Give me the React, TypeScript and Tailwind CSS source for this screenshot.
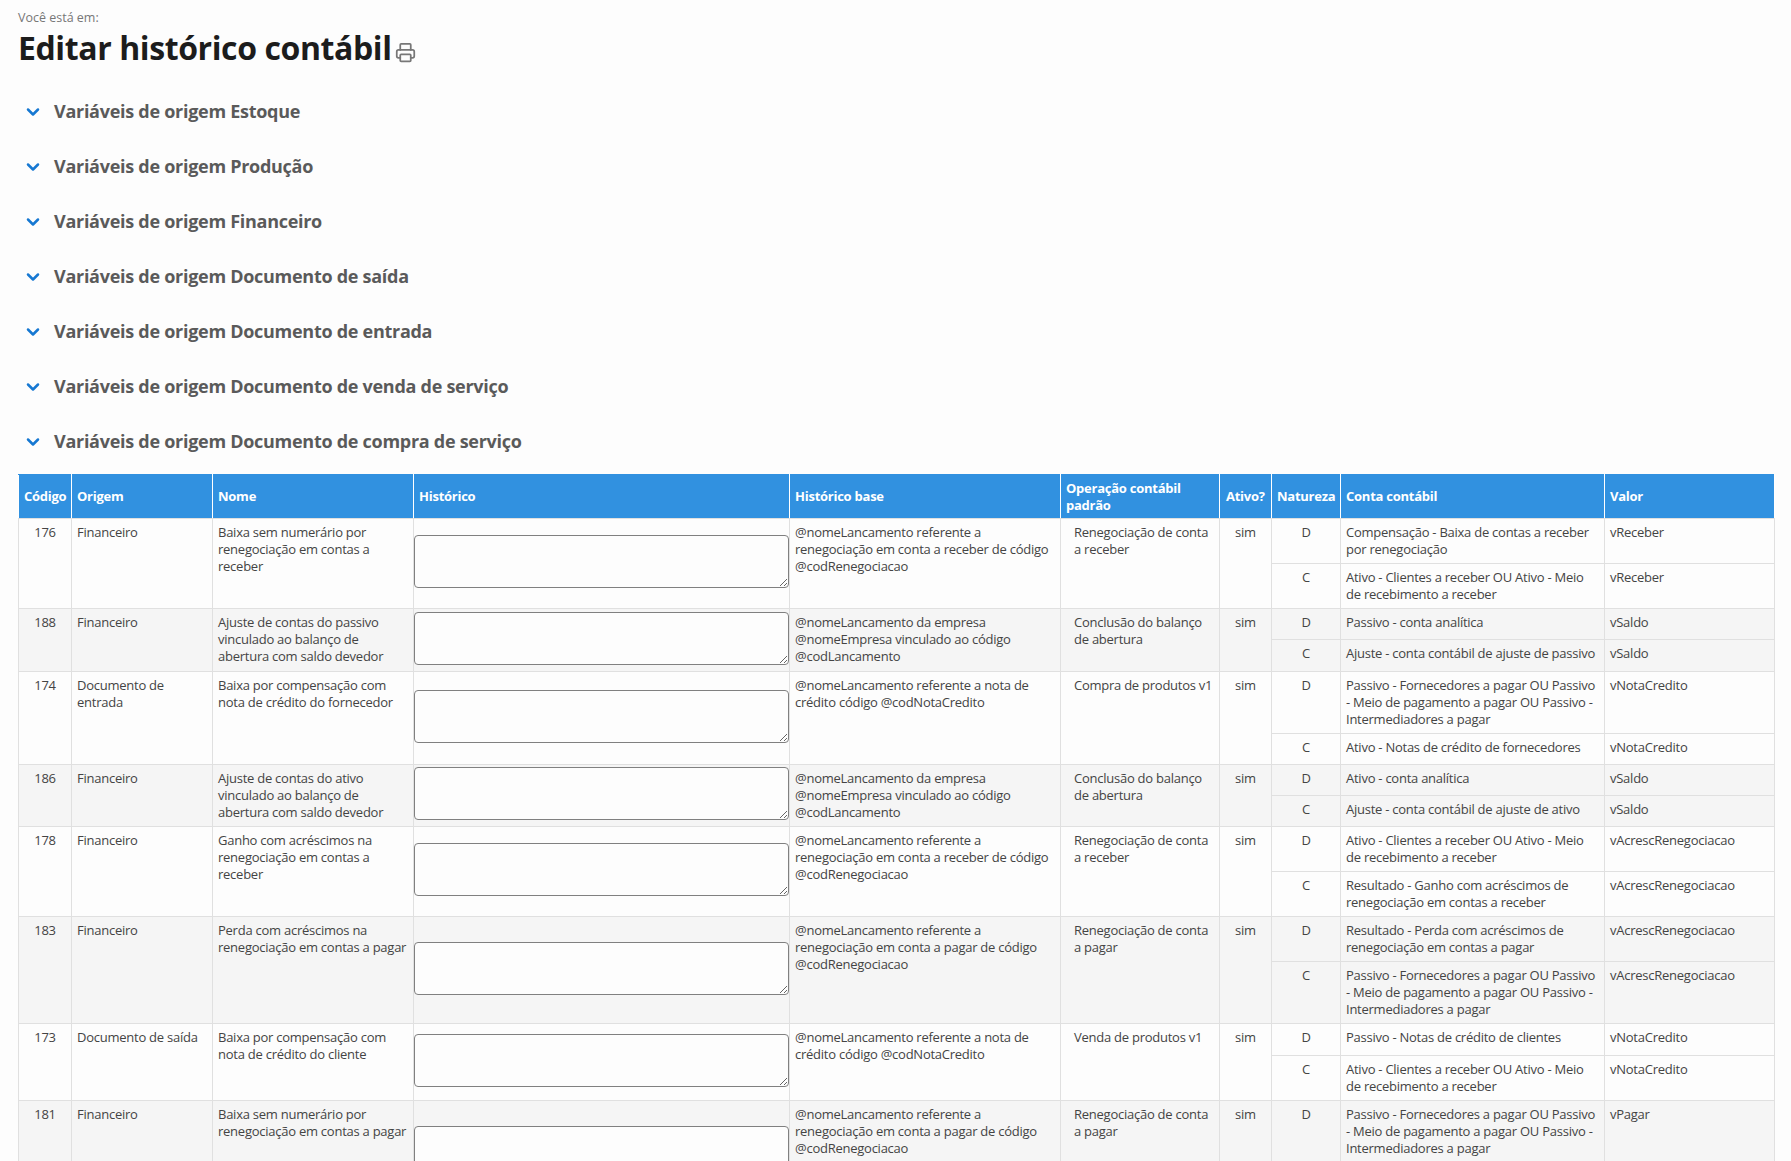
import { Fragment } from "react";
import { ChevronDown, Printer } from "lucide-react";

interface Entry {
  nat: string;
  conta: string;
  valor: string;
  h: string;
}

interface Row {
  cod: number;
  origem: string;
  nome: string;
  base: string;
  op: string;
  entries: Entry[];
}

const SECTIONS = [
  "Estoque",
  "Produção",
  "Financeiro",
  "Documento de saída",
  "Documento de entrada",
  "Documento de venda de serviço",
  "Documento de compra de serviço",
];

const ROWS: Row[] = [
  {
    cod: 176,
    origem: "Financeiro",
    nome: "Baixa sem numerário por renegociação em contas a receber",
    base: "@nomeLancamento referente a renegociação em conta a receber de código @codRenegociacao",
    op: "Renegociação de conta a receber",
    entries: [
      { nat: "D", conta: "Compensação - Baixa de contas a receber por renegociação", valor: "vReceber", h: "h-[45px]" },
      { nat: "C", conta: "Ativo - Clientes a receber OU Ativo - Meio de recebimento a receber", valor: "vReceber", h: "h-[45px]" },
    ],
  },
  {
    cod: 188,
    origem: "Financeiro",
    nome: "Ajuste de contas do passivo vinculado ao balanço de abertura com saldo devedor",
    base: "@nomeLancamento da empresa @nomeEmpresa vinculado ao código @codLancamento",
    op: "Conclusão do balanço de abertura",
    entries: [
      { nat: "D", conta: "Passivo - conta analítica", valor: "vSaldo", h: "h-[31px]" },
      { nat: "C", conta: "Ajuste - conta contábil de ajuste de passivo", valor: "vSaldo", h: "h-[32px]" },
    ],
  },
  {
    cod: 174,
    origem: "Documento de entrada",
    nome: "Baixa por compensação com nota de crédito do fornecedor",
    base: "@nomeLancamento referente a nota de crédito código @codNotaCredito",
    op: "Compra de produtos v1",
    entries: [
      { nat: "D", conta: "Passivo - Fornecedores a pagar OU Passivo - Meio de pagamento a pagar OU Passivo - Intermediadores a pagar", valor: "vNotaCredito", h: "h-[62px]" },
      { nat: "C", conta: "Ativo - Notas de crédito de fornecedores", valor: "vNotaCredito", h: "h-[31px]" },
    ],
  },
  {
    cod: 186,
    origem: "Financeiro",
    nome: "Ajuste de contas do ativo vinculado ao balanço de abertura com saldo devedor",
    base: "@nomeLancamento da empresa @nomeEmpresa vinculado ao código @codLancamento",
    op: "Conclusão do balanço de abertura",
    entries: [
      { nat: "D", conta: "Ativo - conta analítica", valor: "vSaldo", h: "h-[31px]" },
      { nat: "C", conta: "Ajuste - conta contábil de ajuste de ativo", valor: "vSaldo", h: "h-[31px]" },
    ],
  },
  {
    cod: 178,
    origem: "Financeiro",
    nome: "Ganho com acréscimos na renegociação em contas a receber",
    base: "@nomeLancamento referente a renegociação em conta a receber de código @codRenegociacao",
    op: "Renegociação de conta a receber",
    entries: [
      { nat: "D", conta: "Ativo - Clientes a receber OU Ativo - Meio de recebimento a receber", valor: "vAcrescRenegociacao", h: "h-[45px]" },
      { nat: "C", conta: "Resultado - Ganho com acréscimos de renegociação em contas a receber", valor: "vAcrescRenegociacao", h: "h-[45px]" },
    ],
  },
  {
    cod: 183,
    origem: "Financeiro",
    nome: "Perda com acréscimos na renegociação em contas a pagar",
    base: "@nomeLancamento referente a renegociação em conta a pagar de código @codRenegociacao",
    op: "Renegociação de conta a pagar",
    entries: [
      { nat: "D", conta: "Resultado - Perda com acréscimos de renegociação em contas a pagar", valor: "vAcrescRenegociacao", h: "h-[45px]" },
      { nat: "C", conta: "Passivo - Fornecedores a pagar OU Passivo - Meio de pagamento a pagar OU Passivo - Intermediadores a pagar", valor: "vAcrescRenegociacao", h: "h-[62px]" },
    ],
  },
  {
    cod: 173,
    origem: "Documento de saída",
    nome: "Baixa por compensação com nota de crédito do cliente",
    base: "@nomeLancamento referente a nota de crédito código @codNotaCredito",
    op: "Venda de produtos v1",
    entries: [
      { nat: "D", conta: "Passivo - Notas de crédito de clientes", valor: "vNotaCredito", h: "h-[32px]" },
      { nat: "C", conta: "Ativo - Clientes a receber OU Ativo - Meio de recebimento a receber", valor: "vNotaCredito", h: "h-[45px]" },
    ],
  },
  {
    cod: 181,
    origem: "Financeiro",
    nome: "Baixa sem numerário por renegociação em contas a pagar",
    base: "@nomeLancamento referente a renegociação em conta a pagar de código @codRenegociacao",
    op: "Renegociação de conta a pagar",
    entries: [
      // the row continues below the fold, hence the height
      { nat: "D", conta: "Passivo - Fornecedores a pagar OU Passivo - Meio de pagamento a pagar OU Passivo - Intermediadores a pagar", valor: "vPagar", h: "h-[107px]" },
    ],
  },
];

const TH = "border border-x-white border-t-[#3191e0] border-b-[#e0e0e0] px-[5px] py-0 text-left align-middle font-bold";
const TD = "border border-[#e0e0e0] px-[5px] pt-[5px] pb-0 align-top";

export default function App() {
  return (
    <div className="h-[1161px] overflow-hidden bg-[#fdfdfd] px-[18px] font-['Open_Sans',sans-serif] text-[13px] leading-[17px] tracking-[-0.25px] text-[#444]">
      <div className="pt-[10px] text-[12.5px] leading-4 tracking-normal text-[#777]">Você está em:</div>
      <div className="flex items-end">
        <h1 className="text-[32px] leading-[44px] font-bold tracking-[-0.4px] text-[#1c1c1c]">Editar histórico contábil</h1>
        <Printer className="mb-[7px] ml-[3px] size-[21px] text-[#777]" strokeWidth={2} />
      </div>
      <div className="mt-[14px] mb-[5px]">
        {SECTIONS.map((s) => (
          <div key={s} className="flex h-[55px] items-center">
            <ChevronDown className="ml-[5px] size-[20px] text-[#1678d2]" strokeWidth={3} />
            <span className="ml-[11px] text-[18px] font-bold tracking-[-0.28px] text-[#5a5a5a]">Variáveis de origem {s}</span>
          </div>
        ))}
      </div>
      <table className="w-[1756px] table-fixed border-collapse">
        <thead>
          <tr className="h-[44px] bg-[#3191e0] text-white">
            <th className={`${TH} w-[53px]`}>Código</th>
            <th className={`${TH} w-[141px]`}>Origem</th>
            <th className={`${TH} w-[201px]`}>Nome</th>
            <th className={`${TH} w-[376px]`}>Histórico</th>
            <th className={`${TH} w-[271px]`}>Histórico base</th>
            <th className={`${TH} w-[159px]`}>Operação contábil padrão</th>
            <th className={`${TH} w-[52px] pl-[6px]`}>Ativo?</th>
            <th className={`${TH} w-[69px]`}>Natureza</th>
            <th className={`${TH} w-[264px]`}>Conta contábil</th>
            <th className={`${TH} w-[170px]`}>Valor</th>
          </tr>
        </thead>
        <tbody>
          {ROWS.map((r, i) => (
            <Fragment key={r.cod}>
              {r.entries.map((e, j) => (
                <tr key={e.nat} className={i % 2 ? "bg-[#f5f5f5]" : "bg-[#fdfdfd]"}>
                  {j === 0 && (
                    <>
                      <td rowSpan={r.entries.length} className={`${TD} text-center`}>{r.cod}</td>
                      <td rowSpan={r.entries.length} className={TD}>{r.origem}</td>
                      <td rowSpan={r.entries.length} className={TD}>{r.nome}</td>
                      <td rowSpan={r.entries.length} className="border border-[#e0e0e0] p-0 align-middle">
                        <textarea className="mb-[4px] block h-[53px] w-full rounded-[4px] border border-[#808080] bg-[#fdfdfd]" />
                      </td>
                      <td rowSpan={r.entries.length} className={TD}>{r.base}</td>
                      <td rowSpan={r.entries.length} className={`${TD} pl-[13px]`}>{r.op}</td>
                      <td rowSpan={r.entries.length} className={`${TD} text-center`}>sim</td>
                    </>
                  )}
                  <td className={`${TD} ${e.h} text-center`}>{e.nat}</td>
                  <td className={TD}>{e.conta}</td>
                  <td className={TD}>{e.valor}</td>
                </tr>
              ))}
            </Fragment>
          ))}
        </tbody>
      </table>
    </div>
  );
}
